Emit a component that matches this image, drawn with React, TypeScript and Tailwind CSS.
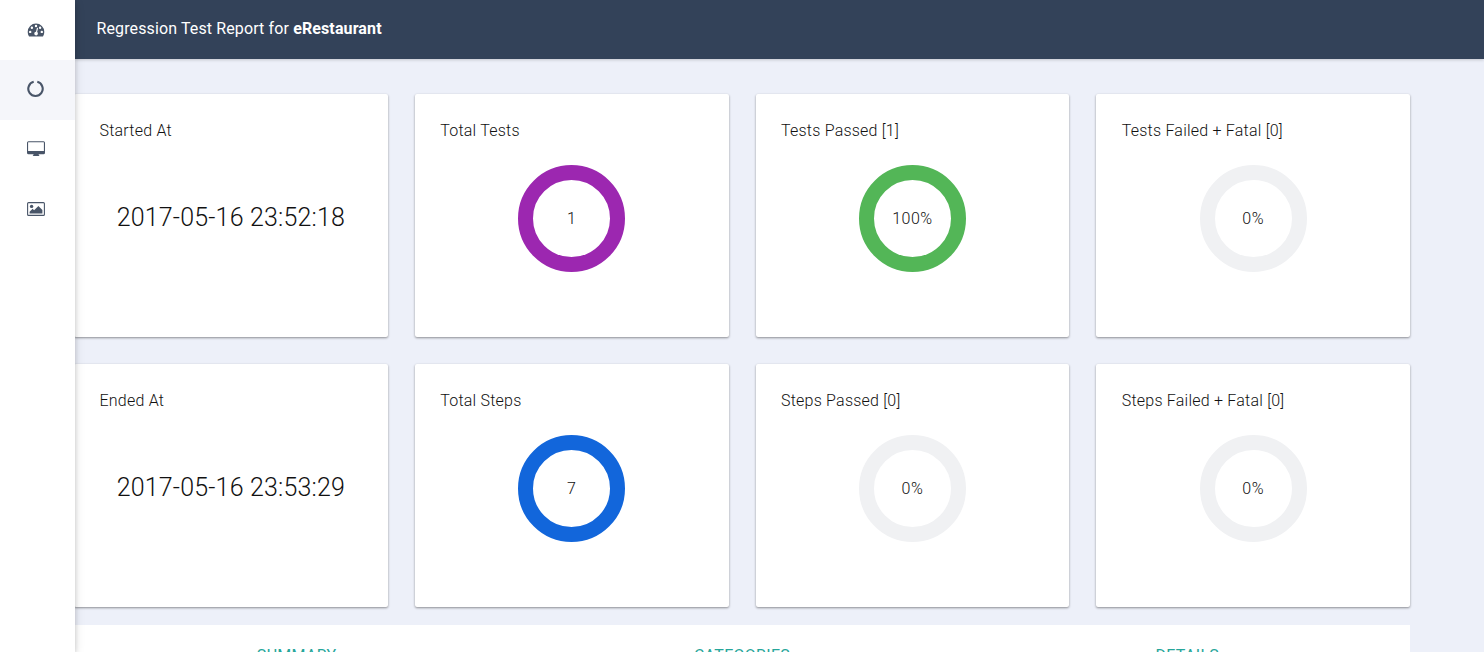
import type { ReactNode } from "react";

function Ring({ color, label }: { color: string; label: string }) {
  return (
    <div className="mt-[22px] grid h-[107px] place-items-center">
      <svg className="col-start-1 row-start-1 size-[107px]" viewBox="0 0 107 107">
        <circle cx="53.5" cy="53.5" r="46" fill="none" stroke={color} strokeWidth="15" />
      </svg>
      <span className="col-start-1 row-start-1 leading-6">{label}</span>
    </div>
  );
}

function Card({ title, children }: { title: string; children: ReactNode }) {
  return (
    <section className="h-[243px] rounded-[2px] bg-white px-[25px] pt-[25px] shadow-[0_1px_3px_rgba(0,0,0,0.2),0_1px_2px_rgba(0,0,0,0.24)]">
      <h2 className="h-6 pl-[0.5px] leading-6 tracking-[0.22px]">{title}</h2>
      {children}
    </section>
  );
}

function Time({ value }: { value: string }) {
  return <div className="mt-[57px] text-center text-[25px] leading-[36px] tracking-[0.18px] whitespace-nowrap">{value}</div>;
}

function GaugeIcon() {
  return (
    <svg className="h-[14px] w-[18px]" viewBox="0 0 18 14" fill="#495568">
      <path
        fillRule="evenodd"
        d="M9 .6a8.3 8.3 0 0 0-8.3 8.3c0 1.6.4 3.1 1.2 4.3.2.2.4.3.6.3h13c.3 0 .5-.1.6-.3.8-1.2 1.2-2.7 1.2-4.3A8.3 8.3 0 0 0 9 .6ZM3.2 7.7a1.2 1.2 0 1 1 0 2.4 1.2 1.2 0 0 1 0-2.4Zm1.7-4.2a1.2 1.2 0 1 1 0 2.4 1.2 1.2 0 0 1 0-2.4ZM9 1.8a1.2 1.2 0 1 1 0 2.4 1.2 1.2 0 0 1 0-2.4Zm4.1 1.7a1.2 1.2 0 1 1 0 2.4 1.2 1.2 0 0 1 0-2.4Zm1.7 4.2a1.2 1.2 0 1 1 0 2.4 1.2 1.2 0 0 1 0-2.4ZM9.9 5.1l-.9 3.7a1.8 1.8 0 1 0 1.1.3L11 5.4c.2-.8-.9-1.1-1.1-.3Z"
      />
    </svg>
  );
}

function NotchIcon() {
  return (
    <svg className="size-[18px]" viewBox="0 0 18 18" fill="none" stroke="#495568" strokeWidth="2.1">
      <path d="M7.7 1.8A7.2 7.2 0 1 0 11.300 1.8" />
    </svg>
  );
}

function DesktopIcon() {
  return (
    <svg className="h-[16px] w-[18px]" viewBox="0 0 18 16" fill="#495568">
      <path
        fillRule="evenodd"
        d="M1.500.3h15A1.500 1.500 0 0 1 18 1.800v10a1.500 1.500 0 0 1-1.500 1.500h-4.900l.3 1c.4.100.5.3.5.700H5.800c0-.4.2-.6.5-.7l.3-1H1.500A1.500 1.500 0 0 1 0 11.800v-10A1.500 1.500 0 0 1 1.500.3Zm-.4 1.300v8.400h15.800V1.600a.3.3 0 0 0-.3-.3H1.400a.3.3 0 0 0-.3.3Z"
      />
    </svg>
  );
}

function PictureIcon() {
  return (
    <svg className="h-[14px] w-[18px]" viewBox="0 0 18 14" fill="#495568">
      <rect x=".6" y=".6" width="16.8" height="12.8" rx="1" fill="none" stroke="#495568" strokeWidth="1.1" />
      <circle cx="4.6" cy="4.4" r="1.7" />
      <path d="M2.600 11.500V9.700l3-3 1.500 1.500 4.300-4.300 4 4v3.600Z" />
    </svg>
  );
}

export default function App() {
  return (
    <div className="flex h-[652px] w-full overflow-hidden bg-[#edf0f9] font-['Roboto',sans-serif] text-base font-light tracking-[0.4px] text-[#111]">
      <nav className="z-20 flex w-[75px] shrink-0 flex-col bg-white shadow-[0_2px_5px_rgba(0,0,0,0.16),0_2px_10px_rgba(0,0,0,0.12)]">
        <a className="flex h-[60px] items-center pl-[26.5px]"><GaugeIcon /></a>
        <a className="flex h-[60px] items-center bg-[#f5f6fa] pb-[2px] pl-[26px]"><NotchIcon /></a>
        <a className="flex h-[58px] items-center pl-[27px]"><DesktopIcon /></a>
        <a className="flex h-[62px] items-center pl-[27px]"><PictureIcon /></a>
      </nav>
      <div className="min-w-0 flex-1">
        <header className="flex h-[59px] items-center bg-[#334259] pb-[2px] pl-[21.5px] font-normal tracking-[0.12px] text-white shadow-[0_1px_3px_rgba(0,0,0,0.18)]">
          <h1>Regression Test Report for <b className="font-bold">eRestaurant</b></h1>
        </header>
        <main className="pt-[35px] pr-[74px]">
          <div className="-ml-px grid grid-cols-4 gap-x-[27px] gap-y-[27px]">
            <Card title="Started At"><Time value="2017-05-16 23:52:18" /></Card>
            <Card title="Total Tests"><Ring color="#9c27b0" label="1" /></Card>
            <Card title="Tests Passed [1]"><Ring color="#53b657" label="100%" /></Card>
            <Card title="Tests Failed + Fatal [0]"><Ring color="#f0f1f3" label="0%" /></Card>
            <Card title="Ended At"><Time value="2017-05-16 23:53:29" /></Card>
            <Card title="Total Steps"><Ring color="#1266db" label="7" /></Card>
            <Card title="Steps Passed [0]"><Ring color="#f0f1f3" label="0%" /></Card>
            <Card title="Steps Failed + Fatal [0]"><Ring color="#f0f1f3" label="0%" /></Card>
          </div>
          <div className="mt-[18px] -ml-px grid h-[60px] grid-cols-3 bg-white pt-[19px] text-center text-base font-normal tracking-[0.3px] text-[#26a69a]">
            <span>SUMMARY</span>
            <span>CATEGORIES</span>
            <span>DETAILS</span>
          </div>
        </main>
      </div>
    </div>
  );
}
